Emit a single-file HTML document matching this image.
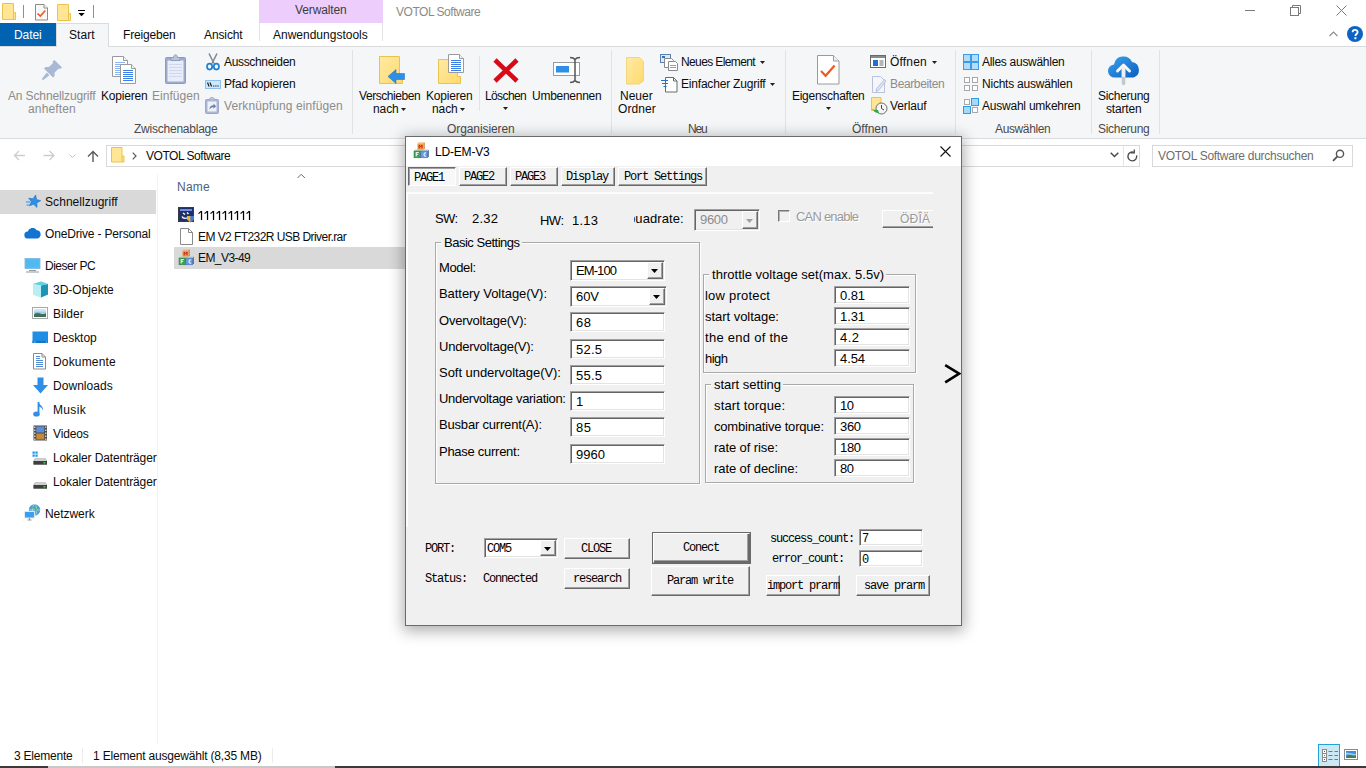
<!DOCTYPE html>
<html lang="de">
<head>
<meta charset="utf-8">
<title>VOTOL Software</title>
<style>
html,body{margin:0;padding:0;background:#fff;}
body{width:1366px;height:768px;overflow:hidden;font-family:"Liberation Sans",sans-serif;}
#r{position:relative;width:1366px;height:768px;overflow:hidden;background:#fff;}
#r div,#r span,#r svg{position:absolute;box-sizing:border-box;}
#r span{white-space:nowrap;}
.s{font:12px/16px "Liberation Sans",sans-serif;color:#0c0c0c;}
.g{font:12px/16px "Liberation Sans",sans-serif;color:#8c8c8c;}
.d{font:13px/16px "Liberation Sans",sans-serif;color:#000;}
.m{font:12px/14px "Liberation Mono",monospace;color:#000;}
.big{font:28px/30px "Liberation Sans",sans-serif;color:#000;}
.ed{background:#fff;border:1px solid #a0a0a0;border-right-color:#fff;border-bottom-color:#fff;box-shadow:inset 1px 1px 0 #646464, inset -1px -1px 0 #e3e3e3;}
.bt{background:#f0f0f0;border:1px solid #fff;border-right-color:#696969;border-bottom-color:#696969;box-shadow:inset -1px -1px 0 #a0a0a0;}
.gb{border:1px solid #a9a9a9;box-shadow:1px 1px 0 #fff, inset 1px 1px 0 #fff;}
</style>
</head>
<body>
<div id="r">
<div style="left:0px;top:47px;width:1366px;height:91px;background:#f5f6f7;"></div>
<div style="left:0px;top:46px;width:1366px;height:1px;background:#dadbdc;"></div>
<div style="left:0px;top:138px;width:1366px;height:1px;background:#dadbdc;"></div>
<div style="left:0px;top:23px;width:56px;height:23px;background:#0063b1;"></div>
<span class="s" style="left:14px;top:27px;letter-spacing:-0.079px;color:#fff;">Datei</span>
<div style="left:56px;top:23px;width:53px;height:24px;background:#f5f6f7;border:1px solid #dadbdc;border-bottom:none;"></div>
<span class="s" style="left:69px;top:27px;letter-spacing:0.089px;">Start</span>
<span class="s" style="left:123px;top:27px;letter-spacing:-0.168px;">Freigeben</span>
<span class="s" style="left:204px;top:27px;letter-spacing:-0.110px;">Ansicht</span>
<div style="left:259px;top:0px;width:124px;height:23px;background:#eccdfb;"></div>
<span class="s" style="left:295px;top:2px;letter-spacing:-0.125px;color:#3c3c3c;">Verwalten</span>
<div style="left:259px;top:23px;width:1px;height:18px;background:#e3e3e3;"></div>
<div style="left:382px;top:23px;width:1px;height:18px;background:#e3e3e3;"></div>
<span class="s" style="left:273px;top:27px;">Anwendungstools</span>
<span class="s" style="left:396px;top:4px;letter-spacing:-0.462px;color:#8a8a8a;">VOTOL Software</span>
<div style="left:352px;top:50px;width:1px;height:84px;background:#e2e3e4;"></div>
<div style="left:611px;top:50px;width:1px;height:84px;background:#e2e3e4;"></div>
<div style="left:785px;top:50px;width:1px;height:84px;background:#e2e3e4;"></div>
<div style="left:955px;top:50px;width:1px;height:84px;background:#e2e3e4;"></div>
<div style="left:1091px;top:50px;width:1px;height:84px;background:#e2e3e4;"></div>
<div style="left:1159px;top:50px;width:1px;height:84px;background:#e2e3e4;"></div>
<div style="left:479px;top:56px;width:1px;height:55px;background:#e2e3e4;"></div>
<span class="g" style="left:8px;top:88px;letter-spacing:-0.134px;">An Schnellzugriff</span>
<span class="g" style="left:28px;top:101px;letter-spacing:0.140px;">anheften</span>
<span class="s" style="left:101px;top:88px;letter-spacing:-0.192px;">Kopieren</span>
<span class="g" style="left:152px;top:88px;letter-spacing:0.046px;">Einfügen</span>
<span class="s" style="left:224px;top:54px;letter-spacing:-0.336px;">Ausschneiden</span>
<span class="s" style="left:224px;top:76px;letter-spacing:-0.197px;">Pfad kopieren</span>
<span class="g" style="left:224px;top:98px;letter-spacing:0.102px;">Verknüpfung einfügen</span>
<span class="s" style="left:134px;top:121px;letter-spacing:-0.232px;color:#4a4a4a;">Zwischenablage</span>
<span class="s" style="left:359px;top:88px;letter-spacing:-0.435px;">Verschieben</span>
<span class="s" style="left:373px;top:101px;letter-spacing:-0.110px;">nach</span>
<span class="s" style="left:426px;top:88px;letter-spacing:-0.192px;">Kopieren</span>
<span class="s" style="left:432px;top:101px;letter-spacing:-0.110px;">nach</span>
<span class="s" style="left:485px;top:88px;letter-spacing:-0.612px;">Löschen</span>
<span class="s" style="left:532px;top:88px;letter-spacing:-0.262px;">Umbenennen</span>
<span class="s" style="left:447px;top:121px;letter-spacing:-0.091px;color:#4a4a4a;">Organisieren</span>
<span class="s" style="left:620px;top:88px;">Neuer</span>
<span class="s" style="left:618px;top:101px;letter-spacing:0.068px;">Ordner</span>
<span class="s" style="left:681px;top:54px;letter-spacing:-0.612px;">Neues Element</span>
<span class="s" style="left:681px;top:76px;letter-spacing:-0.196px;">Einfacher Zugriff</span>
<span class="s" style="left:688px;top:121px;letter-spacing:-1.158px;color:#4a4a4a;">Neu</span>
<span class="s" style="left:792px;top:88px;letter-spacing:-0.280px;">Eigenschaften</span>
<span class="s" style="left:890px;top:54px;letter-spacing:0.178px;">Öffnen</span>
<span class="g" style="left:890px;top:76px;letter-spacing:-0.372px;">Bearbeiten</span>
<span class="s" style="left:890px;top:98px;letter-spacing:-0.110px;">Verlauf</span>
<span class="s" style="left:852px;top:121px;letter-spacing:-0.022px;color:#4a4a4a;">Öffnen</span>
<span class="s" style="left:982px;top:54px;letter-spacing:-0.287px;">Alles auswählen</span>
<span class="s" style="left:982px;top:76px;letter-spacing:-0.224px;">Nichts auswählen</span>
<span class="s" style="left:982px;top:98px;letter-spacing:-0.224px;">Auswahl umkehren</span>
<span class="s" style="left:995px;top:121px;letter-spacing:-0.377px;color:#4a4a4a;">Auswählen</span>
<span class="s" style="left:1098px;top:88px;letter-spacing:-0.293px;">Sicherung</span>
<span class="s" style="left:1106px;top:101px;letter-spacing:-0.165px;">starten</span>
<span class="s" style="left:1098px;top:121px;letter-spacing:-0.293px;color:#4a4a4a;">Sicherung</span>
<svg style="left:401px;top:108px;" width="5" height="3" viewBox="0 0 5 3"><path d="M0 0h5L2.5 3z" fill="#1f1f1f"/></svg>
<svg style="left:460px;top:108px;" width="5" height="3" viewBox="0 0 5 3"><path d="M0 0h5L2.5 3z" fill="#1f1f1f"/></svg>
<svg style="left:503px;top:107px;" width="5" height="3" viewBox="0 0 5 3"><path d="M0 0h5L2.5 3z" fill="#1f1f1f"/></svg>
<svg style="left:760px;top:61px;" width="5" height="3" viewBox="0 0 5 3"><path d="M0 0h5L2.5 3z" fill="#1f1f1f"/></svg>
<svg style="left:770px;top:83px;" width="5" height="3" viewBox="0 0 5 3"><path d="M0 0h5L2.5 3z" fill="#1f1f1f"/></svg>
<svg style="left:826px;top:107px;" width="5" height="3" viewBox="0 0 5 3"><path d="M0 0h5L2.5 3z" fill="#1f1f1f"/></svg>
<svg style="left:932px;top:61px;" width="5" height="3" viewBox="0 0 5 3"><path d="M0 0h5L2.5 3z" fill="#1f1f1f"/></svg>
<div style="left:106px;top:145px;width:1034px;height:22px;border:1px solid #d9d9d9;background:#fff;"></div>
<div style="left:1123px;top:146px;width:1px;height:20px;background:#e5e5e5;"></div>
<div style="left:1152px;top:145px;width:201px;height:22px;border:1px solid #d9d9d9;background:#fff;"></div>
<span class="s" style="left:146px;top:148px;letter-spacing:-0.462px;">VOTOL Software</span>
<span class="s" style="left:1158px;top:148px;letter-spacing:-0.282px;color:#6d6d6d;">VOTOL Software durchsuchen</span>
<div style="left:157px;top:174px;width:1px;height:570px;background:#f2f2f2;"></div>
<div style="left:0px;top:190px;width:156px;height:24px;background:#d9d9d9;"></div>
<span class="s" style="left:45px;top:194px;letter-spacing:0.067px;">Schnellzugriff</span>
<span class="s" style="left:45px;top:226px;letter-spacing:-0.168px;">OneDrive - Personal</span>
<span class="s" style="left:45px;top:258px;letter-spacing:-0.498px;">Dieser PC</span>
<span class="s" style="left:53px;top:282px;">3D-Objekte</span>
<span class="s" style="left:53px;top:306px;">Bilder</span>
<span class="s" style="left:53px;top:330px;letter-spacing:-0.055px;">Desktop</span>
<span class="s" style="left:53px;top:354px;letter-spacing:0.166px;">Dokumente</span>
<span class="s" style="left:53px;top:378px;letter-spacing:0.041px;">Downloads</span>
<span class="s" style="left:53px;top:402px;letter-spacing:0.339px;">Musik</span>
<span class="s" style="left:53px;top:426px;letter-spacing:-0.157px;">Videos</span>
<span class="s" style="left:53px;top:450px;letter-spacing:-0.131px;">Lokaler Datenträger</span>
<span class="s" style="left:53px;top:474px;letter-spacing:-0.131px;">Lokaler Datenträger</span>
<span class="s" style="left:45px;top:506px;letter-spacing:-0.045px;">Netzwerk</span>
<span class="s" style="left:177px;top:179px;letter-spacing:0.228px;color:#4c607a;">Name</span>
<div style="left:174px;top:247px;width:232px;height:22px;background:#d9d9d9;"></div>
<svg style="left:198px;top:210px;" width="54" height="11" viewBox="0 0 54 11"><g fill="#000"><rect x="2.9" y="1" width="1.25" height="9"/><path d="M0.5 3.6L3.4 1.3" stroke="#000" stroke-width="1.1" fill="none"/><rect x="8.9" y="1" width="1.25" height="9"/><path d="M6.5 3.6L9.4 1.3" stroke="#000" stroke-width="1.1" fill="none"/><rect x="14.9" y="1" width="1.25" height="9"/><path d="M12.5 3.6L15.4 1.3" stroke="#000" stroke-width="1.1" fill="none"/><rect x="20.9" y="1" width="1.25" height="9"/><path d="M18.5 3.6L21.4 1.3" stroke="#000" stroke-width="1.1" fill="none"/><rect x="26.9" y="1" width="1.25" height="9"/><path d="M24.5 3.6L27.4 1.3" stroke="#000" stroke-width="1.1" fill="none"/><rect x="32.9" y="1" width="1.25" height="9"/><path d="M30.5 3.6L33.4 1.3" stroke="#000" stroke-width="1.1" fill="none"/><rect x="38.9" y="1" width="1.25" height="9"/><path d="M36.5 3.6L39.4 1.3" stroke="#000" stroke-width="1.1" fill="none"/><rect x="44.9" y="1" width="1.25" height="9"/><path d="M42.5 3.6L45.4 1.3" stroke="#000" stroke-width="1.1" fill="none"/><rect x="50.9" y="1" width="1.25" height="9"/><path d="M48.5 3.6L51.4 1.3" stroke="#000" stroke-width="1.1" fill="none"/></g></svg>
<span class="s" style="left:198px;top:229px;letter-spacing:-0.564px;">EM V2 FT232R USB Driver.rar</span>
<span class="s" style="left:198px;top:250px;letter-spacing:-0.572px;">EM_V3-49</span>
<span class="s" style="left:14px;top:748px;letter-spacing:-0.223px;">3 Elemente</span>
<span class="s" style="left:93px;top:748px;letter-spacing:-0.186px;">1 Element ausgewählt (8,35 MB)</span>
<div style="left:82px;top:748px;width:1px;height:15px;background:#ececec;"></div>
<div style="left:272px;top:748px;width:1px;height:15px;background:#ececec;"></div>
<div style="left:1318px;top:744px;width:22px;height:23px;background:#cce8f4;border:1px solid #26a0da;"></div>
<div style="left:0px;top:766px;width:1366px;height:2px;background:#3a3a3a;"></div>
<div style="left:48px;top:766px;width:287px;height:2px;background:#c9c9c9;"></div>
<div style="left:405px;top:136px;width:557px;height:490px;background:#f0f0f0;border:1px solid #6b6b6b;box-shadow:0 3px 14px 2px rgba(0,0,0,0.32);"></div>
<div style="left:406px;top:137px;width:555px;height:29px;background:#fff;"></div>
<span class="s" style="left:435px;top:144px;letter-spacing:-0.188px;color:#000;">LD-EM-V3</span>
<svg style="left:940px;top:146px;" width="11" height="11" viewBox="0 0 11 11"><path d="M0.5 0.5L10.5 10.5M10.5 0.5L0.5 10.5" stroke="#111" stroke-width="1.1" fill="none"/></svg>
<div style="left:408px;top:167px;width:48px;height:19px;background:#f8f8f8;border:1px solid #696969;border-right-color:#fff;border-bottom-color:#fff;box-shadow:inset 1px 1px 0 #a0a0a0;"></div>
<span class="m" style="left:414px;top:171px;letter-spacing:-1.200px;">PAGE1</span>
<div class="bt" style="left:459px;top:167px;width:48px;height:19px;"></div>
<span class="m" style="left:464px;top:170px;letter-spacing:-1.200px;">PAGE2</span>
<div class="bt" style="left:510px;top:167px;width:48px;height:19px;"></div>
<span class="m" style="left:515px;top:170px;letter-spacing:-1.200px;">PAGE3</span>
<div class="bt" style="left:561px;top:167px;width:54px;height:19px;"></div>
<span class="m" style="left:566px;top:170px;letter-spacing:-1.200px;">Display</span>
<div class="bt" style="left:618px;top:167px;width:89px;height:19px;"></div>
<span class="m" style="left:624px;top:170px;letter-spacing:-1.200px;">Port Settings</span>
<div style="left:406px;top:192px;width:527px;height:2px;background:#fcfcfc;"></div>
<div style="left:406px;top:192px;width:2px;height:335px;background:#fcfcfc;"></div>
<span class="d" style="left:435px;top:211px;letter-spacing:-0.664px;">SW:</span>
<span class="d" style="left:472px;top:211px;letter-spacing:0.229px;">2.32</span>
<span class="d" style="left:540px;top:213px;letter-spacing:-0.523px;">HW:</span>
<span class="d" style="left:572px;top:213px;letter-spacing:0.229px;">1.13</span>
<div style="left:634px;top:210px;width:50px;height:18px;overflow:hidden;"><span class="d" style="left:-6px;top:1px;letter-spacing:0.1px;">buadrate:</span></div>
<div class="ed" style="left:694px;top:209px;width:66px;height:22px;background:#f0f0f0;"></div>
<span class="d" style="left:700px;top:212px;letter-spacing:-0.307px;color:#8c8c8c;">9600</span>
<div class="bt" style="left:742px;top:211px;width:16px;height:18px;"><svg style="left:3px;top:7px" width="7" height="4" viewBox="0 0 7 4"><path d="M0 0h7L3.5 4z" fill="#a0a0a0"/></svg></div>
<div style="left:778px;top:210px;width:12px;height:12px;background:#f0f0f0;border:1px solid #7a7a7a;border-right-color:#fff;border-bottom-color:#fff;box-shadow:inset 1px 1px 0 #b0b0b0;"></div>
<span class="d" style="left:796px;top:209px;letter-spacing:-0.790px;color:#9a9a9a;text-shadow:1px 1px 0 #fff;">CAN enable</span>
<div style="left:882px;top:210px;width:51px;height:18px;overflow:hidden;"><div class="bt" style="left:0;top:0;width:60px;height:18px;"></div></div>
<span class="d" style="left:900px;top:211px;letter-spacing:0.219px;color:#9a9a9a;text-shadow:1px 1px 0 #fff;font-size:12px;">ÖÐÎÄ</span>
<div class="gb" style="left:435px;top:242px;width:265px;height:242px;"></div>
<div style="left:441px;top:240px;width:81px;height:5px;background:#f0f0f0;"></div>
<span class="d" style="left:444px;top:235px;letter-spacing:-0.490px;">Basic Settings</span>
<span class="d" style="left:439px;top:260px;letter-spacing:-0.406px;">Model:</span>
<span class="d" style="left:439px;top:286px;letter-spacing:-0.062px;">Battery Voltage(V):</span>
<span class="d" style="left:439px;top:313px;letter-spacing:-0.218px;">Overvoltage(V):</span>
<span class="d" style="left:439px;top:339px;letter-spacing:-0.219px;">Undervoltage(V):</span>
<span class="d" style="left:439px;top:365px;letter-spacing:-0.043px;">Soft undervoltage(V):</span>
<span class="d" style="left:439px;top:391px;letter-spacing:-0.305px;">Undervoltage variation:</span>
<span class="d" style="left:439px;top:417px;letter-spacing:-0.188px;">Busbar current(A):</span>
<span class="d" style="left:439px;top:444px;letter-spacing:-0.273px;">Phase current:</span>
<div class="ed" style="left:570px;top:260px;width:95px;height:21px;"></div>
<span class="d" style="left:576px;top:263px;letter-spacing:-0.906px;">EM-100</span>
<div class="bt" style="left:647px;top:262px;width:16px;height:17px;"><svg style="left:3px;top:6px" width="7" height="4" viewBox="0 0 7 4"><path d="M0 0h7L3.5 4z" fill="#000"/></svg></div>
<div class="ed" style="left:570px;top:286px;width:97px;height:21px;"></div>
<span class="d" style="left:576px;top:289px;letter-spacing:-0.070px;">60V</span>
<div class="bt" style="left:649px;top:288px;width:16px;height:17px;"><svg style="left:3px;top:6px" width="7" height="4" viewBox="0 0 7 4"><path d="M0 0h7L3.5 4z" fill="#000"/></svg></div>
<div class="ed" style="left:570px;top:312px;width:95px;height:20px;"></div>
<span class="d" style="left:576px;top:315px;letter-spacing:0.531px;">68</span>
<div class="ed" style="left:570px;top:339px;width:95px;height:20px;"></div>
<span class="d" style="left:576px;top:342px;letter-spacing:0.229px;">52.5</span>
<div class="ed" style="left:570px;top:365px;width:95px;height:20px;"></div>
<span class="d" style="left:576px;top:368px;letter-spacing:0.229px;">55.5</span>
<div class="ed" style="left:570px;top:391px;width:95px;height:20px;"></div>
<span class="d" style="left:576px;top:394px;">1</span>
<div class="ed" style="left:570px;top:417px;width:95px;height:20px;"></div>
<span class="d" style="left:576px;top:420px;letter-spacing:0.531px;">85</span>
<div class="ed" style="left:570px;top:444px;width:95px;height:20px;"></div>
<span class="d" style="left:576px;top:447px;letter-spacing:0.026px;">9960</span>
<div class="gb" style="left:703px;top:274px;width:213px;height:99px;"></div>
<div style="left:709px;top:272px;width:177px;height:5px;background:#f0f0f0;"></div>
<span class="d" style="left:712px;top:267px;letter-spacing:0.025px;">throttle voltage set(max. 5.5v)</span>
<span class="d" style="left:705px;top:288px;letter-spacing:0.212px;">low protect</span>
<span class="d" style="left:705px;top:309px;letter-spacing:-0.034px;">start voltage:</span>
<span class="d" style="left:705px;top:330px;letter-spacing:0.268px;">the end of the</span>
<span class="d" style="left:705px;top:351px;letter-spacing:-0.526px;">high</span>
<div class="ed" style="left:834px;top:286px;width:76px;height:18px;"></div>
<span class="d" style="left:840px;top:288px;letter-spacing:-0.104px;">0.81</span>
<div class="ed" style="left:834px;top:307px;width:76px;height:18px;"></div>
<span class="d" style="left:840px;top:309px;letter-spacing:-0.104px;">1.31</span>
<div class="ed" style="left:834px;top:328px;width:76px;height:18px;"></div>
<span class="d" style="left:840px;top:330px;letter-spacing:0.461px;">4.2</span>
<div class="ed" style="left:834px;top:349px;width:76px;height:18px;"></div>
<span class="d" style="left:840px;top:351px;letter-spacing:-0.104px;">4.54</span>
<div class="gb" style="left:705px;top:384px;width:209px;height:99px;"></div>
<div style="left:711px;top:382px;width:72px;height:5px;background:#f0f0f0;"></div>
<span class="d" style="left:714px;top:377px;letter-spacing:-0.017px;">start setting</span>
<span class="d" style="left:714px;top:398px;letter-spacing:0.135px;">start torque:</span>
<span class="d" style="left:714px;top:419px;letter-spacing:-0.192px;">combinative torque:</span>
<span class="d" style="left:714px;top:440px;letter-spacing:-0.086px;">rate of rise:</span>
<span class="d" style="left:714px;top:461px;letter-spacing:-0.085px;">rate of decline:</span>
<div class="ed" style="left:834px;top:396px;width:76px;height:18px;"></div>
<span class="d" style="left:840px;top:398px;letter-spacing:-0.469px;">10</span>
<div class="ed" style="left:834px;top:417px;width:76px;height:18px;"></div>
<span class="d" style="left:840px;top:419px;letter-spacing:-0.352px;">360</span>
<div class="ed" style="left:834px;top:438px;width:76px;height:18px;"></div>
<span class="d" style="left:840px;top:440px;letter-spacing:-0.352px;">180</span>
<div class="ed" style="left:834px;top:459px;width:76px;height:18px;"></div>
<span class="d" style="left:840px;top:461px;letter-spacing:-0.469px;">80</span>
<svg style="left:944px;top:363px;" width="17" height="22" viewBox="0 0 17 22"><path d="M1.2 2.2L15.2 10.6L1.2 19.4" stroke="#000" stroke-width="2.6" fill="none" stroke-linejoin="miter"/></svg>
<span class="m" style="left:425px;top:542px;letter-spacing:-1.200px;">PORT:</span>
<span class="m" style="left:425px;top:572px;letter-spacing:-1.200px;">Status:</span>
<span class="m" style="left:483px;top:572px;letter-spacing:-1.200px;">Connected</span>
<div class="ed" style="left:484px;top:538px;width:74px;height:20px;"></div>
<span class="m" style="left:487px;top:542px;letter-spacing:-1.200px;">COM5</span>
<div class="bt" style="left:540px;top:540px;width:16px;height:16px;"><svg style="left:3px;top:6px" width="7" height="4" viewBox="0 0 7 4"><path d="M0 0h7L3.5 4z" fill="#000"/></svg></div>
<div class="bt" style="left:564px;top:538px;width:66px;height:21px;"></div>
<span class="m" style="left:581px;top:542px;letter-spacing:-1.200px;">CLOSE</span>
<div class="bt" style="left:564px;top:568px;width:66px;height:21px;"></div>
<span class="m" style="left:573px;top:572px;letter-spacing:-1.200px;">research</span>
<div style="left:652px;top:532px;width:99px;height:32px;background:#696969;"></div>
<div class="bt" style="left:653px;top:533px;width:97px;height:30px;box-shadow:inset -1px -1px 0 #696969, inset -2px -2px 0 #a0a0a0;"></div>
<span class="m" style="left:683px;top:541px;letter-spacing:-1.200px;">Conect</span>
<div class="bt" style="left:651px;top:566px;width:99px;height:30px;"></div>
<span class="m" style="left:667px;top:574px;letter-spacing:-1.200px;">Param write</span>
<span class="m" style="left:770px;top:532px;letter-spacing:-1.200px;">success_count:</span>
<span class="m" style="left:772px;top:552px;letter-spacing:-1.200px;">error_count:</span>
<div class="ed" style="left:859px;top:529px;width:64px;height:17px;"></div>
<span class="m" style="left:862px;top:532px;letter-spacing:-1.200px;">7</span>
<div class="ed" style="left:859px;top:550px;width:64px;height:17px;"></div>
<span class="m" style="left:862px;top:553px;letter-spacing:-1.200px;">0</span>
<div class="bt" style="left:766px;top:575px;width:74px;height:21px;"></div>
<span class="m" style="left:767px;top:579px;letter-spacing:-1.200px;">import prarm</span>
<div class="bt" style="left:856px;top:575px;width:74px;height:21px;"></div>
<span class="m" style="left:864px;top:579px;letter-spacing:-1.200px;">save prarm</span>
<svg style="left:0;top:0" width="0" height="0"><defs><linearGradient id="fg" x1="0" y1="0" x2="1" y2="1"><stop offset="0" stop-color="#ffeaa6"/><stop offset="1" stop-color="#ffd96b"/></linearGradient></defs></svg>
<svg style="left:2px;top:3px;" width="14" height="17" viewBox="0 0 14 17"><path d="M0.5 0.5h11v9h2v7h-13z" fill="#ffe594" stroke="#eac34f"/><path d="M11.5 9.5v7" stroke="#eac34f" fill="none"/></svg>
<div style="left:23px;top:5px;width:1px;height:13px;background:#8f8f8f;"></div>
<svg style="left:35px;top:4px;" width="13" height="17" viewBox="0 0 13 17"><path d="M0.5 0.5h8.5l3.5 3.5v12h-12z" fill="#f7f8f9" stroke="#8b8b8b"/><path d="M9 0.5v3.5h3.5" fill="#fff" stroke="#8b8b8b"/><path d="M2.5 9.5l2.8 2.6l5-5.6" stroke="#f05a1e" stroke-width="1.6" fill="none"/></svg>
<svg style="left:57px;top:4px;" width="14" height="17" viewBox="0 0 14 17"><path d="M0.5 0.5h11v9h2v7h-13z" fill="#ffe594" stroke="#eac34f"/><path d="M11.5 9.5v7" stroke="#eac34f" fill="none"/></svg>
<svg style="left:78px;top:10px;" width="8" height="7" viewBox="0 0 8 7"><path d="M0 0.5h7" stroke="#000" stroke-width="1"/><path d="M0.3 3h6.4L3.5 6.3z" fill="#000"/></svg>
<div style="left:93px;top:5px;width:1px;height:13px;background:#8f8f8f;"></div>
<svg style="left:1245px;top:10px;" width="11" height="1" viewBox="0 0 11 1"><rect width="10" height="1" fill="#7a7a7a"/></svg>
<svg style="left:1290px;top:5px;" width="11" height="11" viewBox="0 0 11 11"><path d="M2.5 2.5v-2h8v8h-2" fill="none" stroke="#7a7a7a"/><rect x="0.5" y="2.5" width="8" height="8" fill="#fff" stroke="#7a7a7a"/></svg>
<svg style="left:1336px;top:5px;" width="11" height="11" viewBox="0 0 11 11"><path d="M0.5 0.5l10 10M10.5 0.5l-10 10" stroke="#7a7a7a" stroke-width="1" fill="none"/></svg>
<svg style="left:1329px;top:31px;" width="9" height="6" viewBox="0 0 9 6"><path d="M0.5 5l4-4l4 4" stroke="#8a8a8a" stroke-width="1.1" fill="none"/></svg>
<svg style="left:1347px;top:26px;" width="16" height="16" viewBox="0 0 16 16"><circle cx="8" cy="8" r="8" fill="#0d63c4"/><path d="M5.6 6.2c0-3 5-3 5 0c0 1.8-2.2 1.9-2.2 3.8" stroke="#fff" stroke-width="1.8" fill="none"/><rect x="7.4" y="11.2" width="2" height="2" fill="#fff"/></svg>
<svg style="left:41px;top:59px;" width="22" height="22" viewBox="0 0 22 22"><g fill="#a9b8d4"><path d="M13.5 1l7.5 7.5l-2 1.6l-1.3-.6l-4.2 4.2l.2 3.3l-1.7 1.6l-9-9l1.6-1.7l3.3.2l4.2-4.2l-.6-1.3z"/><path d="M5.8 13.6l2.6 2.6l-6.4 5l-1.2-1.2z"/></g></svg>
<svg style="left:111px;top:55px;" width="26" height="30" viewBox="0 0 26 30"><path d="M1.5 1.5h11l4 4v16h-15z" fill="#fff" stroke="#9a9a9a"/><path d="M12.5 1.5v4h4" fill="#f4f4f4" stroke="#9a9a9a"/><path d="M4 7.5h10" stroke="#8db4f2" stroke-width="1"/><path d="M4 9.5h10" stroke="#8db4f2" stroke-width="1"/><path d="M4 11.5h10" stroke="#8db4f2" stroke-width="1"/><path d="M4 13.5h10" stroke="#8db4f2" stroke-width="1"/><path d="M4 15.5h10" stroke="#8db4f2" stroke-width="1"/><path d="M4 17.5h10" stroke="#8db4f2" stroke-width="1"/><path d="M4 19.5h10" stroke="#8db4f2" stroke-width="1"/><path d="M9.5 9.5h11l4 4v15h-15z" fill="#fff" stroke="#9a9a9a"/><path d="M20.5 9.5v4h4" fill="#f4f4f4" stroke="#9a9a9a"/><path d="M12 15.5h10" stroke="#3f7fe8" stroke-width="1"/><path d="M12 17.5h10" stroke="#3f7fe8" stroke-width="1"/><path d="M12 19.5h10" stroke="#3f7fe8" stroke-width="1"/><path d="M12 21.5h10" stroke="#3f7fe8" stroke-width="1"/><path d="M12 23.5h10" stroke="#3f7fe8" stroke-width="1"/><path d="M12 25.5h10" stroke="#3f7fe8" stroke-width="1"/></svg>
<svg style="left:165px;top:54px;" width="22" height="31" viewBox="0 0 22 31"><rect x="0.5" y="3.5" width="20" height="26" rx="1" fill="#9dabcd" stroke="#8c9bc0"/><rect x="2.5" y="6.5" width="16" height="21" fill="#e9edf8"/><path d="M4 10.5h13M4 13.5h13M4 16.5h13M4 19.5h13M4 22.5h13" stroke="#cfd8ef"/><path d="M6 3.5h2.5c0-3.5 4-3.5 4 0h2.5v3h-9z" fill="#b9c3dc" stroke="#8c9bc0"/></svg>
<svg style="left:206px;top:53px;" width="14" height="18" viewBox="0 0 14 18"><path d="M3 0.5l5 10M11 0.5l-5 10" stroke="#7d8792" stroke-width="1.5" fill="none"/><ellipse cx="3.6" cy="13.6" rx="2.6" ry="3" fill="none" stroke="#1f7fd1" stroke-width="1.7"/><ellipse cx="10.4" cy="13.6" rx="2.6" ry="3" fill="none" stroke="#1f7fd1" stroke-width="1.7"/></svg>
<svg style="left:205px;top:80px;" width="16" height="9" viewBox="0 0 16 9"><rect x="0.5" y="0.5" width="15" height="8" fill="#cfe6fb" stroke="#8cc0ee"/><path d="M2.5 2.5l1.6 4M5 2.5l1.6 4" stroke="#222" stroke-width="1.2"/><path d="M8 6h1.3M10.2 6h1.3M12.4 6h1.3" stroke="#222" stroke-width="1.2"/></svg>
<svg style="left:205px;top:97px;" width="15" height="17" viewBox="0 0 15 17"><rect x="0.5" y="2.5" width="13" height="14" rx="1" fill="#aab6d6" stroke="#9aa7cb"/><rect x="2.5" y="4.5" width="9" height="10" fill="#eef1f9"/><path d="M4.5 2.5c0-2.6 5-2.6 5 0" fill="#c5cde2" stroke="#9aa7cb"/><path d="M4.5 12.5c0-3 1.5-4.3 4-4.3v-1.6l2.6 2.6l-2.6 2.6v-1.6c-1.6 0-2.8.6-4 2.3z" fill="#6f7fa8"/></svg>
<svg style="left:379px;top:55px;" width="27" height="30" viewBox="0 0 27 30"><path d="M0.5 1.5h20v21h3v6h-23z" fill="url(#fg)" stroke="#e8c350"/><path d="M9 21.5l8-7v4h8.500v6h-8.500v4z" fill="#2f8fe6" stroke="#2079cf" stroke-width=".6"/></svg>
<svg style="left:438px;top:54px;" width="27" height="31" viewBox="0 0 27 31"><path d="M0.500 5.500h19v17h3v7h-22z" fill="url(#fg)" stroke="#e8c350"/><path d="M10.5 0.5h11l4 4v14h-15z" fill="#fff" stroke="#9a9a9a"/><path d="M21.5 0.5v4h4" fill="#f4f4f4" stroke="#9a9a9a"/><path d="M13 6.5h10" stroke="#3f7fe8" stroke-width="1"/><path d="M13 8.5h10" stroke="#3f7fe8" stroke-width="1"/><path d="M13 10.5h10" stroke="#3f7fe8" stroke-width="1"/><path d="M13 12.5h10" stroke="#3f7fe8" stroke-width="1"/><path d="M13 14.5h10" stroke="#3f7fe8" stroke-width="1"/><path d="M13 16.5h10" stroke="#3f7fe8" stroke-width="1"/></svg>
<svg style="left:493px;top:58px;" width="26" height="25" viewBox="0 0 26 25"><path d="M2 2L24 23M24 2L2 23" stroke="#d60b17" stroke-width="4.6" fill="none"/></svg>
<svg style="left:553px;top:56px;" width="29" height="28" viewBox="0 0 29 28"><rect x="0.5" y="6.5" width="26" height="13" fill="#fff" stroke="#9a9a9a"/><rect x="3" y="10" width="13" height="6.500" fill="#2f8fe6"/><path d="M17 1.500c2.500 0 4 .5 5 2c1-1.500 2.500-2 5-2M17 26.500c2.500 0 4-.5 5-2c1 1.500 2.500 2 5 2M22 3.500v21" stroke="#555" stroke-width="1.500" fill="none"/></svg>
<svg style="left:625px;top:56px;" width="21" height="30" viewBox="0 0 21 30"><path d="M3 2.500l13 1.500v22l-13 2.500z" fill="#f3d27a"/><path d="M1.500 1.500h13l4 4v19.500l-4.500 3h-12.500z" fill="url(#fg)" stroke="#efcf6a" stroke-width=".8"/></svg>
<svg style="left:660px;top:54px;" width="18" height="17" viewBox="0 0 18 17"><rect x="0.5" y="0.5" width="10" height="8" fill="#dbe9f9" stroke="#5b7fae"/><rect x="2" y="2" width="3" height="2" fill="#2f6fc0"/><path d="M4.500 4.500h7l2 2v7h-9z" fill="#fff" stroke="#8a8a8a"/><path d="M8.500 7.500h7l2 2v7h-9z" fill="#fff" stroke="#8a8a8a"/><path d="M10 11.500h6M10 13.500h6" stroke="#e0807a"/></svg>
<svg style="left:661px;top:75px;" width="17" height="18" viewBox="0 0 17 18"><path d="M4.500 2.500h8l3.500 3.500v11h-11.500z" fill="#fff" stroke="#6a6a6a"/><path d="M12.500 2.500v3.500h3.500" fill="none" stroke="#6a6a6a"/><path d="M0 5.500h7M1 8.500h6M2.500 11.500h3" stroke="#2f6fc0" stroke-width="1.200"/></svg>
<svg style="left:817px;top:55px;" width="23" height="30" viewBox="0 0 23 30"><path d="M0.500 0.500h16l5.500 5.500v23h-21.500z" fill="#fff" stroke="#9a9a9a"/><path d="M16.500 0.500v5.500h5.500" fill="#f2f2f2" stroke="#9a9a9a"/><path d="M4 16l4.600 4.800l9-10.300" stroke="#f05a1e" stroke-width="2.200" fill="none"/></svg>
<svg style="left:870px;top:55px;" width="17" height="14" viewBox="0 0 17 14"><rect x="0.5" y="0.5" width="15" height="12" fill="#fff" stroke="#6a6a6a"/><rect x="1" y="1" width="14" height="2" fill="#8a8a8a"/><rect x="3" y="5" width="5" height="6" fill="#1f6fd0"/><path d="M9.500 6h4M9.500 8h4M9.500 10h4" stroke="#6a6a6a"/></svg>
<svg style="left:871px;top:76px;" width="16" height="17" viewBox="0 0 16 17"><path d="M1.500 0.500h8l4 4v12h-12z" fill="#f4f6fb" stroke="#b8c2dc"/><path d="M13.500 3.500l1.500 1.500l-7.500 9.500l-2.500.8l.5-2.500z" fill="#dfe5f4" stroke="#aab6d6" stroke-width=".8"/></svg>
<svg style="left:871px;top:97px;" width="17" height="18" viewBox="0 0 17 18"><path d="M0.500 0.500h9.500v13h-9.500z" fill="#ffe594" stroke="#eac34f"/><circle cx="10.500" cy="11.500" r="5.500" fill="#f4f4f4" stroke="#6a6a6a"/><path d="M10.500 8v3.500l2.500 1.500" stroke="#444" fill="none"/><path d="M2 11.500a5 5 0 0 0 6 4.500l-1 -3l-6 -0.500z" fill="#2fa84f"/></svg>
<svg style="left:963px;top:54px;" width="17" height="16" viewBox="0 0 17 16"><rect x="0.5" y="0.5" width="7" height="7" fill="#b4dcf8" stroke="#3a9be8"/><rect x="8.5" y="0.5" width="7" height="7" fill="#b4dcf8" stroke="#3a9be8"/><rect x="0.5" y="8.5" width="7" height="7" fill="#b4dcf8" stroke="#3a9be8"/><rect x="8.5" y="8.5" width="7" height="7" fill="#b4dcf8" stroke="#3a9be8"/></svg>
<svg style="left:964px;top:77px;" width="15" height="14" viewBox="0 0 15 14"><rect x="0.5" y="0.5" width="5" height="5" fill="#fff" stroke="#a8a8a8"/><rect x="8.5" y="0.5" width="5" height="5" fill="#fff" stroke="#a8a8a8"/><rect x="0.5" y="8.5" width="5" height="5" fill="#fff" stroke="#a8a8a8"/><rect x="8.5" y="8.5" width="5" height="5" fill="#fff" stroke="#a8a8a8"/></svg>
<svg style="left:963px;top:98px;" width="17" height="16" viewBox="0 0 17 16"><rect x="1.5" y="1.5" width="5" height="5" fill="#fff" stroke="#a8a8a8"/><rect x="8.5" y="0.5" width="7" height="7" fill="#a6d8f7" stroke="#2f9be6"/><rect x="0.5" y="8.5" width="7" height="7" fill="#a6d8f7" stroke="#2f9be6"/><rect x="9.5" y="9.5" width="5" height="5" fill="#fff" stroke="#a8a8a8"/></svg>
<svg style="left:1107px;top:56px;" width="34" height="30" viewBox="0 0 34 30"><defs><linearGradient id="cg" x1="0" y1="0" x2="1" y2="1"><stop offset="0" stop-color="#3aa3ee"/><stop offset="1" stop-color="#0a5fc0"/></linearGradient></defs><path d="M8 21.500a6.500 6.500 0 0 1 -1-13a9.500 9.500 0 0 1 18-2.500a8 8 0 0 1 1.500 15.500z" fill="url(#cg)"/><path d="M16.500 27.500v-14" stroke="#c4c9d0" stroke-width="3.600" stroke-linecap="round"/><path d="M10.500 15l6-6l6 6" stroke="#f4f6f8" stroke-width="3" fill="none" stroke-linejoin="round" stroke-linecap="round"/><path d="M16.500 11v10" stroke="#eef0f3" stroke-width="3.600"/></svg>
<svg style="left:13px;top:150px;" width="13" height="11" viewBox="0 0 13 11"><path d="M12 5.500H1.500M6 1L1.500 5.500L6 10" stroke="#cdcdcd" stroke-width="1.300" fill="none"/></svg>
<svg style="left:43px;top:150px;" width="13" height="11" viewBox="0 0 13 11"><path d="M0.500 5.500H11M6.500 1L11 5.500L6.500 10" stroke="#cdcdcd" stroke-width="1.300" fill="none"/></svg>
<svg style="left:69px;top:154px;" width="7" height="5" viewBox="0 0 7 5"><path d="M0.500 0.500l3 3l3-3" stroke="#c4c4c4" fill="none"/></svg>
<svg style="left:87px;top:150px;" width="12" height="13" viewBox="0 0 12 13"><path d="M6 12V1.500M1 6.500L6 1.500L11 6.500" stroke="#5a5a5a" stroke-width="1.400" fill="none"/></svg>
<svg style="left:111px;top:147px;" width="14" height="16" viewBox="0 0 14 16"><path d="M0.500 0.500h10.500v8.500h2v6h-12.500z" fill="#ffe594" stroke="#eac34f"/><path d="M11 9v6" stroke="#eac34f"/></svg>
<svg style="left:132px;top:152px;" width="5" height="8" viewBox="0 0 5 8"><path d="M0.700 0.700l3.300 3.300l-3.300 3.300" stroke="#5a5a5a" stroke-width="1.200" fill="none"/></svg>
<svg style="left:1110px;top:152px;" width="9" height="6" viewBox="0 0 9 6"><path d="M0.700 0.700l3.800 3.800l3.800-3.800" stroke="#4a4a4a" stroke-width="1.500" fill="none"/></svg>
<svg style="left:1126px;top:149px;" width="13" height="14" viewBox="0 0 13 14"><path d="M10.600 6.400A4.400 4.400 0 1 1 7.800 3.300" stroke="#4a4a4a" stroke-width="1.400" fill="none"/><path d="M8.300 0.600v3.300h-3.300" stroke="#4a4a4a" stroke-width="1.300" fill="none"/></svg>
<svg style="left:1332px;top:149px;" width="13" height="13" viewBox="0 0 13 13"><circle cx="8" cy="4.800" r="3.600" stroke="#555" stroke-width="1.400" fill="none"/><path d="M5.400 7.400L1 11.800" stroke="#555" stroke-width="1.800"/></svg>
<svg style="left:297px;top:173px;" width="9" height="6" viewBox="0 0 9 6"><path d="M0.500 5l3.700-3.700l3.700 3.700" stroke="#6a6a6a" stroke-width="1" fill="none"/></svg>
<svg style="left:26px;top:193px;" width="15" height="16" viewBox="0 0 15 16"><path d="M8.500 1l2 4.800l5 .4l-3.800 3.300l1.200 5l-4.400-2.700l-4.400 2.700l1.200-5l-3.800-3.300l5-.4z" transform="rotate(12 8 8) scale(.88) translate(1 1)" fill="#2f8fe6" stroke="#1a6fc4" stroke-width=".6"/><path d="M0 9h4M0.500 12h3" stroke="#2f8fe6"/></svg>
<svg style="left:24px;top:228px;" width="17" height="11" viewBox="0 0 17 11"><path d="M4 10.500a3.500 3.500 0 0 1 -.3-7a5 5 0 0 1 9-1.300a4.200 4.200 0 0 1 .6 8.300z" fill="#1373d0"/></svg>
<svg style="left:24px;top:258px;" width="17" height="15" viewBox="0 0 17 15"><rect x="1" y="0.500" width="15" height="10" fill="#5cc4f4" stroke="#7fb0d8" stroke-width=".8"/><rect x="2" y="1.500" width="13" height="8" fill="#4fbaf2"/><path d="M5 12.500h7M2 14h13" stroke="#8a9aa8" stroke-width="1.200"/></svg>
<svg style="left:32px;top:281px;" width="17" height="17" viewBox="0 0 17 17"><path d="M1 3l8-2.500l7 2.500v10.500l-7 3l-8-3z" fill="#9fe6f0"/><path d="M9 4.500v12l7-3v-10.500z" fill="#1f93b4"/><path d="M1 3l8 1.500l7-1.500l-7-2.500z" fill="#5fd0e2"/><path d="M1 3l8 1.500v12l-8-3z" fill="#b9eef5"/></svg>
<svg style="left:32px;top:307px;" width="17" height="13" viewBox="0 0 17 13"><rect x="0.500" y="0.500" width="15" height="11" fill="#fff" stroke="#a8a8a8"/><rect x="2" y="2" width="12" height="8" fill="#cfe6f4"/><path d="M2 10v-2.500c2-2 4-2.500 6-1.200c2 1 4 .6 6-.3v4z" fill="#3f6f58"/><path d="M2 4.500h12v1.800h-12z" fill="#8cc3e8" opacity=".7"/></svg>
<svg style="left:32px;top:331px;" width="17" height="14" viewBox="0 0 17 14"><rect x="0.500" y="0.500" width="15.500" height="11.500" fill="#1f8fe6"/><rect x="0.500" y="9.800" width="15.500" height="2.200" fill="#1677c8"/><path d="M2 11h1.500M14 11h1" stroke="#cfe8ff" stroke-width=".8"/></svg>
<svg style="left:33px;top:353px;" width="14" height="17" viewBox="0 0 14 17"><path d="M0.500 0.500h8.500l3.500 3.500v12h-12z" fill="#fff" stroke="#8a8a8a"/><path d="M9 0.500v3.500h3.500" fill="none" stroke="#8a8a8a"/><path d="M3 3.500h4M3 5.500h4M3 7.500h7M3 9.500h7M3 11.500h7M3 13.500h7" stroke="#3f7fd0" stroke-width=".9"/></svg>
<svg style="left:32px;top:377px;" width="17" height="17" viewBox="0 0 17 17"><path d="M5.500 0.500h6v7.500h4.500l-7.500 8.500l-7.500-8.500h4.500z" fill="#2f8fe6"/></svg>
<svg style="left:33px;top:401px;" width="13" height="17" viewBox="0 0 13 17"><path d="M5.500 1v11" stroke="#2f8fe6" stroke-width="1.800"/><path d="M5.500 1c1 3.500 5.500 4 4.500 9c-.3-3-2.500-4-4.500-4.500z" fill="#2f8fe6"/><ellipse cx="3.500" cy="13" rx="3.300" ry="2.600" fill="#2f8fe6"/></svg>
<svg style="left:33px;top:425px;" width="15" height="16" viewBox="0 0 15 16"><rect x="0.500" y="0.500" width="13.500" height="15" fill="#4a4a4a"/><rect x="3.300" y="1.500" width="8" height="6" fill="#5a8fd8"/><rect x="3.300" y="8.500" width="8" height="6" fill="#c8883a"/><path d="M1.800 1.500v13.500M12.800 1.500v13.500" stroke="#e8e8e8" stroke-width="1.200" stroke-dasharray="1.500 1.500"/></svg>
<svg style="left:32px;top:451px;" width="17" height="15" viewBox="0 0 17 15"><path d="M3 7.500h10.500l1.500 2.500v3.500h-13.500v-3.500z" fill="#8a8a8a"/><rect x="1.500" y="10" width="13.500" height="3.600" fill="#3f3f3f"/><rect x="11.500" y="11.200" width="1.800" height="1.300" fill="#3fe05a"/><path d="M3.200 7.600h10.100l1.200 2.400h-12.500z" fill="#cfcfcf"/><path d="M0.500 0.500h2.300v2.300h-2.300zM3.400 0.500h2.300v2.300h-2.300zM0.500 3.400h2.300v2.300h-2.300zM3.400 3.400h2.300v2.300h-2.300z" fill="#1f9be8"/></svg>
<svg style="left:32px;top:475px;" width="17" height="15" viewBox="0 0 17 15"><path d="M3 7.500h10.500l1.500 2.500v3.500h-13.500v-3.500z" fill="#8a8a8a"/><rect x="1.500" y="10" width="13.500" height="3.600" fill="#3f3f3f"/><rect x="11.500" y="11.200" width="1.800" height="1.300" fill="#3fe05a"/><path d="M3.200 7.600h10.100l1.200 2.400h-12.500z" fill="#cfcfcf"/></svg>
<svg style="left:24px;top:504px;" width="17" height="18" viewBox="0 0 17 18"><circle cx="10.500" cy="6" r="5.700" fill="#4a9ad8"/><path d="M10.500 0.300c-3 2-3 9.400 0 11.400c3-2 3-9.400 0-11.400M4.800 6h11.400" stroke="#bfe0f6" stroke-width=".8" fill="none"/><path d="M8 3c1 1.500 3 .5 4 2s-1 3-2 4" stroke="#5aba6a" stroke-width="1.600" fill="none"/><rect x="0.500" y="7.500" width="10" height="6.500" fill="#3aa0ea" stroke="#e8eef4" stroke-width=".9"/><path d="M3.500 16h4M5.500 14v2" stroke="#8a9aa8" stroke-width="1.200"/></svg>
<svg style="left:178px;top:207px;" width="16" height="16" viewBox="0 0 16 16"><rect x="0.500" y="0.500" width="15" height="14" fill="#1f2f6a" stroke="#3a3a4a"/><rect x="2" y="2" width="12" height="2" fill="#6f8fd8"/><path d="M4 9.500c1 2.500 5 2.500 6.500 0M5 6l2 1.500M9 5.500l1.500 1.500" stroke="#fff" stroke-width="1.400" fill="none"/><path d="M9 9h6.500v3.500l-3.200 3l-3.300-3z" fill="#f0b030"/><path d="M12.300 9v6.500l3.200-3v-3.500z" fill="#3a7fe0"/></svg>
<svg style="left:180px;top:228px;" width="13" height="17" viewBox="0 0 13 17"><path d="M0.500 0.500h8l4 4v12h-12z" fill="#fff" stroke="#8a8a8a"/><path d="M8.500 0.500v4h4" fill="none" stroke="#8a8a8a"/></svg>
<svg style="left:178px;top:249px;" width="17" height="17" viewBox="0 0 17 17"><path d="M4.500 1.500l1.200-1.200h6l-1.200 1.200z" fill="#f8c080"/><path d="M10.500 1.500l1.200-1.200v6.500l-1.200 1.200z" fill="#c87828"/><rect x="4.500" y="1.500" width="6" height="6.500" fill="#f09a3a"/><path d="M1 9l1.200-1.400h13l-1.200 1.400z" fill="#b8d8c8"/><rect x="1" y="9" width="6.800" height="6.800" fill="#3f9f52" stroke="#2f7a40" stroke-width=".5"/><rect x="7.800" y="9" width="6.800" height="6.800" fill="#6a9ade" stroke="#3f6ab8" stroke-width=".5"/><path d="M14.600 9l1.200-1.400v6.600l-1.200 1.600z" fill="#3f5f98"/><path d="M6.200 6.500v-3.500l1.400 1.800l1.400-1.800v3.500" stroke="#c8202a" stroke-width="1" fill="none"/><path d="M3.200 14.500v-4h2.600M3.200 12.400h2" stroke="#e8f4e8" stroke-width="1.100" fill="none"/><path d="M13 11c-2.600-1-2.600 4 0 3" stroke="#eef4ff" stroke-width="1.100" fill="none"/></svg>
<svg style="left:413px;top:142px;" width="17" height="17" viewBox="0 0 17 17"><path d="M4.500 1.500l1.200-1.200h6l-1.200 1.200z" fill="#f8c080"/><path d="M10.500 1.500l1.200-1.200v6.500l-1.200 1.200z" fill="#c87828"/><rect x="4.500" y="1.500" width="6" height="6.500" fill="#f09a3a"/><path d="M1 9l1.200-1.400h13l-1.200 1.400z" fill="#b8d8c8"/><rect x="1" y="9" width="6.800" height="6.800" fill="#3f9f52" stroke="#2f7a40" stroke-width=".5"/><rect x="7.800" y="9" width="6.800" height="6.800" fill="#6a9ade" stroke="#3f6ab8" stroke-width=".5"/><path d="M14.600 9l1.200-1.400v6.600l-1.200 1.600z" fill="#3f5f98"/><path d="M6.200 6.500v-3.500l1.400 1.800l1.400-1.800v3.500" stroke="#c8202a" stroke-width="1" fill="none"/><path d="M3.200 14.500v-4h2.600M3.200 12.400h2" stroke="#e8f4e8" stroke-width="1.100" fill="none"/><path d="M13 11c-2.600-1-2.600 4 0 3" stroke="#eef4ff" stroke-width="1.100" fill="none"/></svg>
<svg style="left:1322px;top:749px;" width="16" height="13" viewBox="0 0 16 13"><rect x="0.500" y="0.500" width="4" height="12" fill="#fff" stroke="#8a8a8a"/><path d="M0.500 4.500h4M0.500 8.500h4" stroke="#8a8a8a"/><rect x="2" y="2" width="1" height="1" fill="#3a6a4a"/><rect x="2" y="6" width="1" height="1" fill="#3a7fe0"/><rect x="2" y="10" width="1" height="1" fill="#e02020"/><path d="M6.500 2.500h4M12.500 2.500h3.500M6.500 6.500h4M12.500 6.500h3.500M6.500 10.500h4M12.500 10.500h3.500" stroke="#7a7a7a" stroke-width="1.200"/></svg>
<svg style="left:1344px;top:749px;" width="14" height="11" viewBox="0 0 14 11"><rect x="0.500" y="0.500" width="13" height="10" fill="#fff" stroke="#8a8a8a"/><rect x="2" y="2" width="10" height="7" fill="#3a8fe0"/><path d="M2 9l3-4l4 2l3-2v4z" fill="#4a7a50"/><path d="M2 3.500l10 1.500v1.500l-10-1z" fill="#bfe0f6" opacity=".7"/></svg>
</div>
</body>
</html>
